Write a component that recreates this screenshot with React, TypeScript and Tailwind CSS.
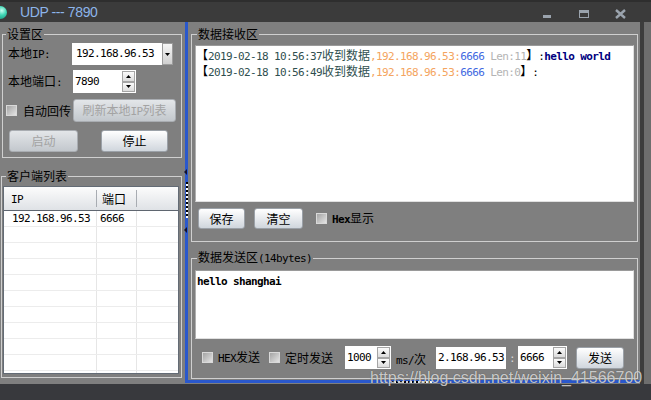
import React from "react";

const MONO = "font-['DejaVu_Sans_Mono',monospace] text-[11px] tracking-[-0.62px]";

function Mx({ t, className = "", bold = false }: { t: string; className?: string; bold?: boolean }) {
  const parts = t.match(/[\x20-\x7e]+|[^\x20-\x7e]+/g) || [];
  return (
    <span className={"whitespace-pre " + className}>
      {parts.map((p, i) =>
        /^[\x20-\x7e]/.test(p) ? (
          <span key={i} className={MONO + (bold ? " font-bold" : "")}>
            {p}
          </span>
        ) : (
          <span key={i}>{p}</span>
        )
      )}
    </span>
  );
}

function Check({ className = "" }: { className?: string }) {
  return (
    <div
      className={
        "w-[11px] h-[11px] shrink-0 border border-[#d9d9d9] bg-linear-to-br from-[#a4a4a4] to-[#e4e4e4] " + className
      }
    />
  );
}

function Btn({
  children,
  className = "",
  disabled = false,
}: {
  children: React.ReactNode;
  className?: string;
  disabled?: boolean;
}) {
  return (
    <div
      className={
        (disabled
          ? "text-[#a3a3a3] border-[#a9adb2] from-[#e3e6e9] to-[#c3c8cd]"
          : "text-black border-[#9ba1a8] from-[#ffffff] to-[#d0d6dd]") +
        " flex items-center justify-center shrink-0 rounded-[3px] border bg-linear-to-b " +
        className
      }
    >
      {children}
    </div>
  );
}

function Up() {
  return (
    <svg width="5" height="3" viewBox="0 0 5 3">
      <path d="M2.5 0L5 3H0Z" fill="#000" />
    </svg>
  );
}
function Down() {
  return (
    <svg width="5" height="3" viewBox="0 0 5 3">
      <path d="M0 0H5L2.5 3Z" fill="#000" />
    </svg>
  );
}

function Spin({ value, className = "" }: { value: string; className?: string }) {
  return (
    <div className={"flex bg-white shrink-0 " + className}>
      <div className="flex-1 pl-[2px] flex items-center">
        <span className={MONO}>{value}</span>
      </div>
      <div className="w-[14px] flex flex-col py-[1px] pr-[1px]">
        <div className="flex-1 border border-[#a5a5a5] bg-linear-to-b from-[#fbfbfb] to-[#dcdcdc] flex items-center justify-center">
          <Up />
        </div>
        <div className="flex-1 border border-[#a5a5a5] bg-linear-to-b from-[#fbfbfb] to-[#dcdcdc] flex items-center justify-center">
          <Down />
        </div>
      </div>
    </div>
  );
}

function RecvLine({ time, len, msg }: { time: string; len: string; msg?: string }) {
  return (
    <div className="h-[16px] whitespace-pre">
      <span>【</span>
      <span className={MONO + " text-[#2f4f4f]"}>2019-02-18 {time}</span>
      <span className="text-[#2f4f4f]">收到数据</span>
      <span className={MONO + " text-[#f4a460]"}>,192.168.96.53:</span>
      <span className={MONO + " text-[#4169e1]"}>6666</span>
      <span className={MONO + " text-[#b4b4b4]"}> Len:{len}</span>
      <span>】</span>
      <span className={MONO}>:</span>
      {msg ? <span className={MONO + " font-bold text-[#000080]"}>{msg}</span> : null}
    </div>
  );
}

export default function App() {
  const rows = Array.from({ length: 11 });
  return (
    <div className="relative w-[651px] h-[400px] overflow-hidden bg-[#7f7f7f] flex flex-col font-['Noto_Sans_CJK_SC',sans-serif] text-[12px] leading-[14px] text-black">
      {/* title bar */}
      <div className="h-[22px] shrink-0 bg-[#3b3b3b] border-t-[2px] border-[#2e2e2e] flex items-start">
        <div className="mt-[4px] ml-[-6px] w-[13px] h-[13px] rounded-full bg-[radial-gradient(circle_at_60%_35%,#c8fff2_0%,#3ed6b4_40%,#0f7f6e_100%)]" />
        <div className="ml-[13px] mt-[2px] font-['Liberation_Sans',sans-serif] text-[14px] leading-[16px] tracking-[-0.4px] text-[#8db5ea]">
          UDP --- 7890
        </div>
        <div className="ml-auto mr-[25px] flex items-start">
          <div className="mt-[13px] w-[8px] h-[3px] bg-[#9aa3ad]" />
          <div className="ml-[28px] mt-[8px] w-[10px] h-[8px] border border-t-[3px] border-[#9aa3ad]" />
          <svg className="ml-[26px] mt-[7px]" width="11" height="10" viewBox="0 0 11 10">
            <path d="M1 1L10 9M10 1L1 9" stroke="#9aa3ad" strokeWidth="2.4" />
          </svg>
        </div>
      </div>

      {/* main */}
      <div className="h-[362px] shrink-0 flex">
        {/* left panel */}
        <div className="w-[185px] shrink-0 flex flex-col">
          <fieldset className="mt-[5px] ml-[2px] w-[180px] border border-[#cfcfcf]">
            <legend className="ml-[3px] px-[1px] leading-[14px]">设置区</legend>
            <div className="pl-[5px] pt-[2px] pb-[5px] flex flex-col">
              <div className="flex items-center h-[22px]">
                <div className="w-[64px]">
                  <Mx t="本地IP:" />
                </div>
                <div className="w-[101px] h-[22px] flex bg-white">
                  <div className="flex-1 pl-[4px] flex items-center">
                    <span className={MONO}>192.168.96.53</span>
                  </div>
                  <div className="w-[11px] border border-[#9c9c9c] bg-linear-to-b from-[#f6f6f6] to-[#cfcfcf] flex items-center justify-center">
                    <Down />
                  </div>
                </div>
              </div>
              <div className="mt-[5px] flex items-center h-[23px]">
                <div className="w-[65px]">
                  <Mx t="本地端口:" />
                </div>
                <Spin value="7890" className="w-[63px] h-[23px]" />
              </div>
              <div className="mt-[6px] flex items-center h-[23px]">
                <Check className="ml-[-2px]" />
                <div className="ml-[6px] w-[48px]">自动回传</div>
                <Btn disabled className="ml-[2px] w-[103px] h-[23px]">
                  <Mx t="刷新本地IP列表" />
                </Btn>
              </div>
              <div className="mt-[8px] flex h-[22px]">
                <Btn disabled className="ml-[1px] w-[69px] h-[22px]">
                  启动
                </Btn>
                <Btn className="ml-[23px] w-[67px] h-[22px]">停止</Btn>
              </div>
            </div>
          </fieldset>

          <fieldset className="mt-[11px] ml-[1px] w-[181px] border border-[#cfcfcf]">
            <legend className="ml-[4px] px-[1px] leading-[14px]">客户端列表</legend>
            <div className="pl-[1px] pt-[3px] pb-[3px]">
              <div className="w-[176px] h-[188px] border border-[#636b75] bg-white overflow-hidden flex flex-col">
                <div className="h-[24px] shrink-0 flex items-center border-b border-[#5f6670] bg-linear-to-b from-[#fcfcfc] to-[#dfe2e6]">
                  <div className="w-[92px] pl-[7px]">
                    <span className={MONO}>IP</span>
                  </div>
                  <div className="w-[1px] h-[17px] bg-[#a8acb2]" />
                  <div className="w-[39px] pl-[5px]">端口</div>
                  <div className="w-[1px] h-[17px] bg-[#a8acb2]" />
                </div>
                {rows.map((_, i) => (
                  <div key={i} className="h-[16px] shrink-0 flex border-b border-[#ececec]">
                    <div className="w-[93px] pl-[8px] border-r border-[#e6e6e6] flex items-center">
                      {i === 0 ? <span className={MONO}>192.168.96.53</span> : null}
                    </div>
                    <div className="w-[40px] pl-[3px] border-r border-[#e6e6e6] flex items-center">
                      {i === 0 ? <span className={MONO}>6666</span> : null}
                    </div>
                  </div>
                ))}
              </div>
            </div>
          </fieldset>
        </div>

        {/* right panel */}
        <div className="relative w-[455px] h-[361px] shrink-0 border-l-[3px] border-b-[3px] border-[#2a58cc] flex flex-col">
          <fieldset className="mt-[5px] ml-[3px] w-[447px] border border-[#cfcfcf]">
            <legend className="ml-[5px] px-[1px] leading-[14px]">数据接收区</legend>
            <div className="pl-[3px] pt-[4px] pb-[12px]">
              <div className="w-[439px] h-[157px] bg-white border border-t-[#9a9a9a] border-l-[#b0b0b0] border-r-[#e0e0e0] border-b-[#e0e0e0] pt-[1px] leading-[16px]">
                <RecvLine time="10:56:37" len="11" msg="hello world" />
                <RecvLine time="10:56:49" len="0" />
              </div>
              <div className="mt-[6px] flex items-center h-[21px]">
                <Btn className="ml-[3px] w-[47px] h-[21px]">保存</Btn>
                <Btn className="ml-[9px] w-[49px] h-[21px]">清空</Btn>
                <Check className="ml-[13px]" />
                <div className="ml-[5px]">
                  <Mx t="Hex显示" bold />
                </div>
              </div>
            </div>
          </fieldset>

          <fieldset className="mt-[8px] ml-[3px] w-[447px] border border-[#cfcfcf]">
            <legend className="ml-[5px] px-[1px] leading-[14px]">
              <Mx t="数据发送区(14bytes)" />
            </legend>
            <div className="pl-[3px] pt-[4px] pb-[9px]">
              <div className="w-[439px] h-[69px] bg-white border border-t-[#9a9a9a] border-l-[#b0b0b0] border-r-[#e0e0e0] border-b-[#e0e0e0] pl-[1px] pt-[1px] leading-[16px]">
                <span className={MONO + " font-bold"}>hello shanghai</span>
              </div>
              <div className="mt-[7px] flex items-center h-[23px]">
                <Check className="ml-[7px]" />
                <div className="ml-[5px] w-[46px]">
                  <Mx t="HEX发送" />
                </div>
                <Check className="ml-[5px]" />
                <div className="ml-[5px] w-[48px]">定时发送</div>
                <Spin value="1000" className="ml-[12px] w-[46px] h-[23px]" />
                <div className="ml-[5px] w-[30px] mt-[4px]">
                  <Mx t="ms/次" />
                </div>
                <div className="ml-[10px] w-[70px] h-[22px] bg-white flex items-center pl-[2px]">
                  <span className={MONO}>2.168.96.53</span>
                </div>
                <div className="w-[12px] text-center">
                  <span className={MONO + " text-[#d8d8d8]"}>:</span>
                </div>
                <Spin value="6666" className="w-[49px] h-[23px]" />
                <Btn className="ml-[9px] w-[48px] h-[22px]">发送</Btn>
              </div>
            </div>
          </fieldset>

          {/* splitter grips */}
          <svg className="absolute left-[-4px] top-[146px]" width="5" height="66" viewBox="0 0 5 66">
            <polygon points="0,4 3,1 3,7" fill="#101030" />
            {Array.from({ length: 9 }).map((_, i) => (
              <g key={i}>
                <rect x="2" y={14 + i * 4} width="2" height="2" fill="#000" />
                <rect x="2" y={16 + i * 4} width="2" height="2" fill="#fff" />
              </g>
            ))}
            <polygon points="0,62 3,59 3,65" fill="#101030" />
          </svg>
          <svg className="absolute bottom-[-3px] left-[204px]" width="42" height="3" viewBox="0 0 42 3">
            {Array.from({ length: 10 }).map((_, i) => (
              <g key={i}>
                <rect x={i * 4} y="1" width="2" height="2" fill="#000" />
                <rect x={i * 4 + 2} y="1" width="2" height="2" fill="#fff" />
              </g>
            ))}
          </svg>
        </div>

        {/* right edge */}
        <div className="w-[11px] shrink-0 flex">
          <div className="w-[4px] bg-[#3d3d3d]" />
          <div className="flex-1 bg-[#6e6e6e]" />
        </div>
      </div>

      {/* bottom dark bar */}
      <div className="h-[16px] shrink-0 bg-[#38393d]" />

      {/* watermark */}
      <div className="absolute left-[370px] top-[368px] font-['Liberation_Sans',sans-serif] text-[16px] leading-[20px] text-[#ececec]/80 [text-shadow:0_0_1px_rgba(0,0,0,0.5)] whitespace-nowrap">
        https://blog.csdn.net/weixin_41566700
      </div>
    </div>
  );
}
